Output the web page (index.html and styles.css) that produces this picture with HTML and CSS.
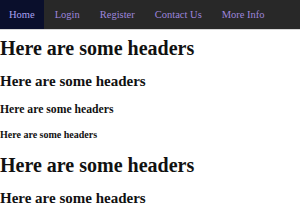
FILE: index.html
```html
<!DOCTYPE html>
<html>
<head>
<meta charset="utf-8">
<link rel="stylesheet" href="styles.css">
</head>
<body>
<nav class="nav">
  <a class="nav-link active" href="#">Home</a>
  <a class="nav-link" href="#">Login</a>
  <a class="nav-link" href="#">Register</a>
  <a class="nav-link" href="#">Contact Us</a>
  <a class="nav-link" href="#">More Info</a>
</nav>
<main class="content">
  <h1 class="h1 first">Here are some headers</h1>
  <h2 class="h2">Here are some headers</h2>
  <h3 class="h3">Here are some headers</h3>
  <h4 class="h4">Here are some headers</h4>
  <h1 class="h1">Here are some headers</h1>
  <h2 class="h2">Here are some headers</h2>
</main>
</body>
</html>
```
FILE: styles.css
```css
html, body {
  margin: 0;
  padding: 0;
  background: #fff;
  font-family: "Liberation Serif", "Times New Roman", serif;
  color: #111;
}
.nav {
  display: flex;
  height: 29px;
  background: #282828;
  border-bottom: 1px solid #d8d8d8;
}
.nav-link {
  display: block;
  padding: 0 9px;
  margin-right: 2px;
  line-height: 29px;
  font-size: 10.5px;
  color: #9d85dc;
  text-decoration: none;
}
.nav-link.active {
  background: #0a0f2c;
  color: #a8a0f0;
}
.content {
  font-size: 10px;
}
.h1, .h2, .h3, .h4 {
  font-weight: bold;
}
.h1 { font-size: 2em; margin: 0.67em 0; }
.h2 { font-size: 1.5em; margin: 0.83em 0; }
.h3 { font-size: 1.17em; margin: 1em 0; }
.h4 { font-size: 1em; margin: 1.33em 0; }
.h1.first { margin-top: 7px; }
```
